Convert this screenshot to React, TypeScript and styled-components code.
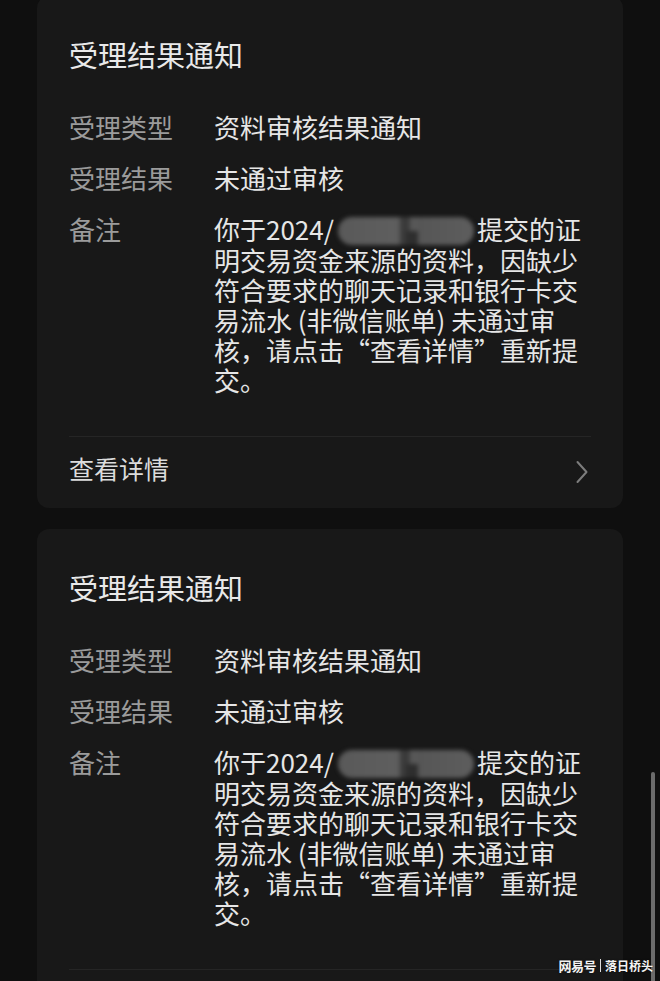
import styled, { createGlobalStyle } from "styled-components";

const GlobalStyle = createGlobalStyle`
  html, body {
    margin: 0;
    padding: 0;
    background: #0f0f0f;
  }
  body {
    font-family: "Noto Sans CJK SC", "Noto Sans", sans-serif;
    -webkit-font-smoothing: antialiased;
  }
`;

const Page = styled.div`
  position: relative;
  height: 981px;
  overflow: hidden;
  padding: 0 37px;
  box-sizing: border-box;
  background: #0f0f0f;
`;

const List = styled.div`
  display: flex;
  flex-direction: column;
  gap: 21px;
  margin-top: -4px;
`;

const Card = styled.section`
  background: #181818;
  border-radius: 12px;
  padding: 38px 32px 0;
`;

const Title = styled.h2`
  margin: 0 0 38px;
  font-size: 29px;
  line-height: 40px;
  font-weight: 400;
  color: #e9e9e9;
`;

const Fields = styled.dl`
  display: grid;
  grid-template-columns: 145px 1fr;
  row-gap: 21px;
  margin: 0;
  padding-bottom: 41px;
  font-size: 26px;
  line-height: 30px;
`;

const Label = styled.dt`
  color: #9b9b9b;
`;

const Value = styled.dd<{ wrap?: boolean }>`
  margin: 0;
  color: #e6e6e6;
  padding-right: ${(p) => (p.wrap ? "8px" : "0")};
`;

// masked date in the remark text
const Masked = styled.span`
  display: inline-block;
  width: 136px;
  height: 28px;
  margin: 0 3px 0 4px;
  vertical-align: -5px;
  border-radius: 14px;
  background:
    linear-gradient(#2e2e2e, #2e2e2e) 68px 14px / 12px 14px no-repeat,
    linear-gradient(#3b3b3b, #3b3b3b) 62px 0 / 10px 28px no-repeat,
    linear-gradient(90deg, #595959 0%, #5e5e5e 40%, #565656 60%, #5d5d5d 100%);
  filter: blur(2px);
`;

const Footer = styled.div`
  display: flex;
  align-items: center;
  justify-content: space-between;
  box-sizing: border-box;
  height: 72px;
  padding-bottom: 10px;
  border-top: 1px solid #252525;
  font-size: 25px;
  color: #dcdcdc;
`;

const Chevron = styled.svg`
  width: 14px;
  height: 24px;
  margin-right: 2px;
  margin-top: 8px;
`;

const ScrollThumb = styled.div`
  position: absolute;
  right: 5px;
  top: 772px;
  bottom: -10px;
  width: 4px;
  border-radius: 2px;
  background: #6b6b6b;
`;

const Watermark = styled.div`
  position: absolute;
  right: 7px;
  bottom: 6px;
  display: flex;
  align-items: center;
  gap: 4px;
  font-size: 12px;
  font-weight: 700;
  color: #f2f2f2;
  text-shadow: 0 0 2px rgba(0, 0, 0, 0.6);
`;

const Brand = styled.span`
  font-size: 13px;
  letter-spacing: -0.5px;
`;

const Bar = styled.span`
  width: 1px;
  height: 13px;
  background: #dddddd;
`;

function NoticeCard() {
  return (
    <Card>
      <Title>受理结果通知</Title>
      <Fields>
        <Label>受理类型</Label>
        <Value>资料审核结果通知</Value>
        <Label>受理结果</Label>
        <Value>未通过审核</Value>
        <Label>备注</Label>
        <Value wrap>
          你于2024/
          <Masked />
          提交的证明交易资金来源的资料，因缺少符合要求的聊天记录和银行卡交易流水 (非微信账单) 未通过审核，请点击“查看详情”重新提交。
        </Value>
      </Fields>
      <Footer>
        <span>查看详情</span>
        <Chevron viewBox="0 0 14 24" fill="none">
          <path d="M2.5 2 L11.5 12 L2.5 22" stroke="#7c7c7c" strokeWidth="2" strokeLinecap="round" strokeLinejoin="round" />
        </Chevron>
      </Footer>
    </Card>
  );
}

export default function App() {
  return (
    <>
      <GlobalStyle />
      <Page>
        <List>
          <NoticeCard />
          <NoticeCard />
        </List>
        <ScrollThumb />
        <Watermark>
          <Brand>网易号</Brand>
          <Bar />
          <span>落日桥头</span>
        </Watermark>
      </Page>
    </>
  );
}
